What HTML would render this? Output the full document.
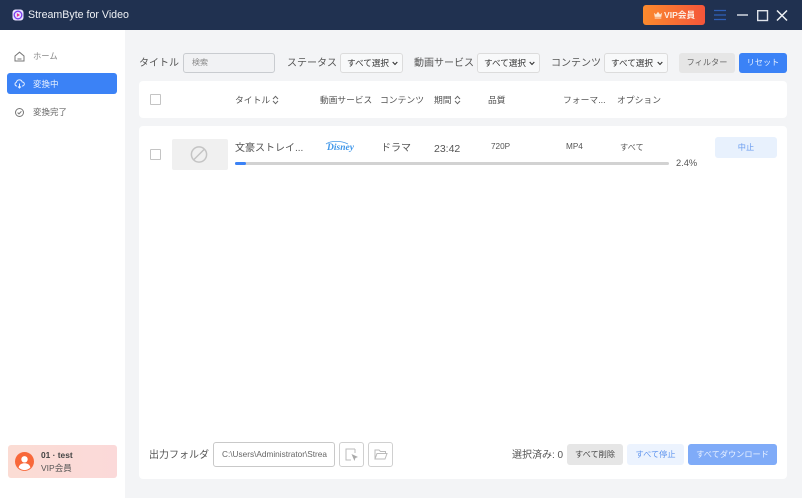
<!DOCTYPE html>
<html lang="ja">
<head>
<meta charset="utf-8">
<style>
html,body{margin:0;padding:0;}
body{width:802px;height:498px;position:relative;overflow:hidden;background:#f3f4f6;font-family:"Liberation Sans","Noto Sans CJK JP",sans-serif;color:#555;}
.a{position:absolute;white-space:nowrap;}
.t{position:absolute;white-space:nowrap;line-height:16px;}
.sel{position:absolute;top:53px;height:20px;box-sizing:border-box;border:1px solid #dcdcdc;border-radius:3px;background:#f8f9fa;font-size:8.6px;line-height:19px;color:#333;padding-left:6px;}
.sel svg{position:absolute;right:4px;top:7px;}
.btn{position:absolute;border-radius:3px;text-align:center;font-size:8.2px;}
.cb{position:absolute;width:9px;height:9px;border:1px solid #c4c4c4;border-radius:1px;background:#fff;}
</style>
</head>
<body>
<!-- title bar -->
<div class="a" style="left:0;top:0;width:802px;height:30px;background:#203150;"></div>
<svg class="a" style="left:12px;top:9px" width="12" height="12" viewBox="0 0 12 12">
  <rect x="0.5" y="0.5" width="11" height="11" rx="3" fill="#e8e2ff"/>
  <circle cx="6" cy="6" r="3.8" fill="none" stroke="#7a3df0" stroke-width="1.3"/>
  <path d="M4.9 4.1L8 6L4.9 7.9Z" fill="#e8308c"/>
</svg>
<div class="t" style="left:28px;top:7px;font-size:10.65px;color:#eef1f5;">StreamByte for Video</div>
<div class="a" style="left:643px;top:5px;width:62px;height:20px;border-radius:3px;background:linear-gradient(90deg,#fb8a2d,#f4553a);"></div>
<svg class="a" style="left:653px;top:11px" width="10" height="8" viewBox="0 0 11 9"><path d="M1 2L3.2 4L5.5 0.8L7.8 4L10 2L9.2 6.6H1.8Z M1.8 7.3H9.2V8.4H1.8Z" fill="#fde6d0"/></svg>
<div class="t" style="left:664px;top:7px;font-size:8.6px;font-weight:bold;color:#fdeee4;">VIP会員</div>
<svg class="a" style="left:713px;top:9px" width="84" height="13" viewBox="0 0 84 13">
  <path d="M1 1.5H13M1 6H13M1 10.5H13" stroke="#2f60b8" stroke-width="1.2" fill="none"/>
  <path d="M24 6H35" stroke="#dfe3ea" stroke-width="1.4" fill="none"/>
  <rect x="44.7" y="1.7" width="9.8" height="9.8" fill="none" stroke="#dfe3ea" stroke-width="1.4"/>
  <path d="M64 1.5L74 11.5M74 1.5L64 11.5" stroke="#eef1f5" stroke-width="1.5" fill="none"/>
</svg>

<!-- sidebar -->
<div class="a" style="left:0;top:30px;width:125px;height:468px;background:#fff;"></div>
<svg class="a" style="left:14px;top:51px" width="11" height="11" viewBox="0 0 11 11"><path d="M1 5L5.5 1.2L10 5V10H1Z" fill="none" stroke="#777" stroke-width="1"/><path d="M3.5 8H7.5" stroke="#777" stroke-width="1"/></svg>
<div class="t" style="left:33px;top:48px;font-size:8.3px;color:#888;">ホーム</div>
<div class="a" style="left:7px;top:73px;width:110px;height:21px;background:#3b82f6;border-radius:3px;"></div>
<svg class="a" style="left:14px;top:79px" width="11" height="10" viewBox="0 0 11 10"><path d="M3 7H2.6A1.9 1.9 0 0 1 2.4 3.3A3 3 0 0 1 8.2 3A2 2 0 0 1 8.4 7H8" fill="none" stroke="#e8f0ff" stroke-width="1"/><path d="M5.5 4.5V9M4 7.5L5.5 9L7 7.5" fill="none" stroke="#e8f0ff" stroke-width="1"/></svg>
<div class="t" style="left:33px;top:76px;font-size:8.5px;color:#eaf2ff;">変換中</div>
<svg class="a" style="left:14px;top:107px" width="11" height="11" viewBox="0 0 11 11"><circle cx="5.5" cy="5.5" r="4" fill="none" stroke="#777" stroke-width="1"/><path d="M3.6 5.6L5 6.9L7.4 4.3" fill="none" stroke="#777" stroke-width="1"/></svg>
<div class="t" style="left:33px;top:104px;font-size:8.5px;color:#666;">変換完了</div>
<div class="a" style="left:8px;top:445px;width:109px;height:33px;border-radius:3px;background:linear-gradient(90deg,#fbdcd4,#fbd9d9);"></div>
<svg class="a" style="left:15px;top:452px" width="19" height="19" viewBox="0 0 19 19">
  <circle cx="9.5" cy="9.5" r="9.5" fill="#f8683a"/>
  <circle cx="9.5" cy="7.3" r="3.2" fill="#fff"/>
  <path d="M3.6 15.5C4.4 12.2 6.8 11.2 9.5 11.2C12.2 11.2 14.6 12.2 15.4 15.5A8 8 0 0 1 3.6 15.5Z" fill="#fff"/>
</svg>
<div class="t" style="left:41px;top:447px;font-size:8.4px;font-weight:bold;color:#444;">01 · test</div>
<div class="t" style="left:41px;top:460px;font-size:8.5px;color:#555;">VIP会員</div>

<!-- filter bar -->
<div class="t" style="left:139px;top:56px;font-size:10px;">タイトル</div>
<div class="a" style="left:183px;top:53px;width:92px;height:20px;box-sizing:border-box;border:1px solid #c9ccd0;border-radius:3px;background:#f1f2f4;"></div>
<div class="t" style="left:192px;top:55px;font-size:8px;color:#888;">検索</div>
<div class="t" style="left:287px;top:56px;font-size:10px;">ステータス</div>
<div class="sel" style="left:340px;width:63px;">すべて選択<svg width="6" height="5" viewBox="0 0 6 5"><path d="M0.7 1L3 3.5L5.3 1" fill="none" stroke="#333" stroke-width="1.1"/></svg></div>
<div class="t" style="left:414px;top:56px;font-size:10px;">動画サービス</div>
<div class="sel" style="left:477px;width:63px;">すべて選択<svg width="6" height="5" viewBox="0 0 6 5"><path d="M0.7 1L3 3.5L5.3 1" fill="none" stroke="#333" stroke-width="1.1"/></svg></div>
<div class="t" style="left:551px;top:56px;font-size:10px;">コンテンツ</div>
<div class="sel" style="left:604px;width:64px;">すべて選択<svg width="6" height="5" viewBox="0 0 6 5"><path d="M0.7 1L3 3.5L5.3 1" fill="none" stroke="#333" stroke-width="1.1"/></svg></div>
<div class="btn" style="left:679px;top:53px;width:56px;height:20px;line-height:20px;background:#e6e6e6;color:#666;">フィルター</div>
<div class="btn" style="left:739px;top:53px;width:48px;height:20px;line-height:20px;background:#3b82f6;color:#e6f0ff;">リセット</div>

<!-- table header -->
<div class="a" style="left:139px;top:81px;width:648px;height:37px;background:#fff;border-radius:4px;"></div>
<div class="cb" style="left:150px;top:94px;"></div>
<div class="t" style="left:235px;top:92px;font-size:8.8px;">タイトル</div>
<svg class="a" style="left:272px;top:95px" width="7" height="10" viewBox="0 0 7 10"><path d="M1 4L3.5 1.3L6 4M1 6L3.5 8.7L6 6" fill="none" stroke="#666" stroke-width="1"/></svg>
<div class="t" style="left:320px;top:92px;font-size:8.7px;">動画サービス</div>
<div class="t" style="left:380px;top:92px;font-size:8.8px;">コンテンツ</div>
<div class="t" style="left:434px;top:92px;font-size:8.8px;">期間</div>
<svg class="a" style="left:454px;top:95px" width="7" height="10" viewBox="0 0 7 10"><path d="M1 4L3.5 1.3L6 4M1 6L3.5 8.7L6 6" fill="none" stroke="#666" stroke-width="1"/></svg>
<div class="t" style="left:488px;top:92px;font-size:8.8px;">品質</div>
<div class="t" style="left:563px;top:92px;font-size:8.8px;">フォーマ...</div>
<div class="t" style="left:617px;top:92px;font-size:8.8px;">オプション</div>

<!-- main card -->
<div class="a" style="left:139px;top:126px;width:648px;height:353px;background:#fff;border-radius:4px;"></div>
<div class="cb" style="left:150px;top:149px;"></div>
<div class="a" style="left:172px;top:139px;width:56px;height:31px;background:#f0f0f0;border-radius:2px;"></div>
<svg class="a" style="left:190px;top:146px" width="18" height="18" viewBox="0 0 18 18"><circle cx="9" cy="8.5" r="7.6" fill="none" stroke="#c4c4c4" stroke-width="1.5"/><path d="M4 13.5L14 3.5" stroke="#c4c4c4" stroke-width="1.5"/></svg>
<div class="t" style="left:235px;top:141px;font-size:10px;">文豪ストレイ...</div>
<svg class="a" style="left:325px;top:140px" width="28" height="10" viewBox="0 0 28 10"><path d="M1 4C6 0.5 16 0.5 23 4" fill="none" stroke="#4a9be8" stroke-width="0.8"/></svg>
<div class="t" style="left:327px;top:140px;font-family:'Liberation Serif',serif;font-style:italic;font-weight:bold;font-size:9.5px;color:#3f97ea;">Disney</div>
<div class="t" style="left:381px;top:141px;font-size:10px;">ドラマ</div>
<div class="t" style="left:434px;top:141px;font-size:10.5px;color:#555;">23:42</div>
<div class="t" style="left:491px;top:139px;font-size:8.2px;">720P</div>
<div class="t" style="left:566px;top:139px;font-size:8.2px;">MP4</div>
<div class="t" style="left:620px;top:140px;font-size:8.2px;">すべて</div>
<div class="btn" style="left:715px;top:137px;width:62px;height:21px;line-height:21px;background:#e8f1fd;color:#6a9cf0;">中止</div>
<div class="a" style="left:235px;top:162px;width:434px;height:3px;background:#d2d2d2;border-radius:2px;"></div>
<div class="a" style="left:235px;top:162px;width:11px;height:3px;background:#3b82f6;border-radius:2px;"></div>
<div class="t" style="left:676px;top:155px;font-size:9.3px;">2.4%</div>

<!-- footer -->
<div class="t" style="left:149px;top:448px;font-size:10px;">出力フォルダ</div>
<div class="a" style="left:213px;top:442px;width:122px;height:25px;box-sizing:border-box;border:1px solid #c9c9c9;border-radius:3px;background:#fff;"></div>
<div class="t" style="left:222px;top:447px;font-size:8.25px;color:#666;">C:\Users\Administrator\Strea</div>
<div class="a" style="left:339px;top:442px;width:25px;height:25px;box-sizing:border-box;border:1px solid #d0d0d0;border-radius:3px;"></div>
<svg class="a" style="left:345px;top:448px" width="14" height="14" viewBox="0 0 14 14"><path d="M10 1H1V12H6" fill="none" stroke="#bbb" stroke-width="1"/><path d="M10 1V5" stroke="#bbb" stroke-width="1"/><path d="M6.5 6L13 9L10.4 10L9.5 13Z" fill="#aaa"/></svg>
<div class="a" style="left:368px;top:442px;width:25px;height:25px;box-sizing:border-box;border:1px solid #d0d0d0;border-radius:3px;"></div>
<svg class="a" style="left:374px;top:449px" width="14" height="11" viewBox="0 0 14 11"><path d="M1 10V1H5L6.5 2.5H11.5V4.5M1 10L3 4.5H13L11 10Z" fill="none" stroke="#bbb" stroke-width="1"/></svg>
<div class="t" style="left:512px;top:448px;font-size:10px;">選択済み: 0</div>
<div class="btn" style="left:567px;top:444px;width:56px;height:21px;line-height:21px;background:#e6e6e6;color:#444;">すべて削除</div>
<div class="btn" style="left:627px;top:444px;width:57px;height:21px;line-height:21px;background:#ecf3fe;color:#5f94ee;">すべて停止</div>
<div class="btn" style="left:688px;top:444px;width:89px;height:21px;line-height:21px;background:#7fabf8;color:#eaf2ff;">すべてダウンロード</div>
</body>
</html>
